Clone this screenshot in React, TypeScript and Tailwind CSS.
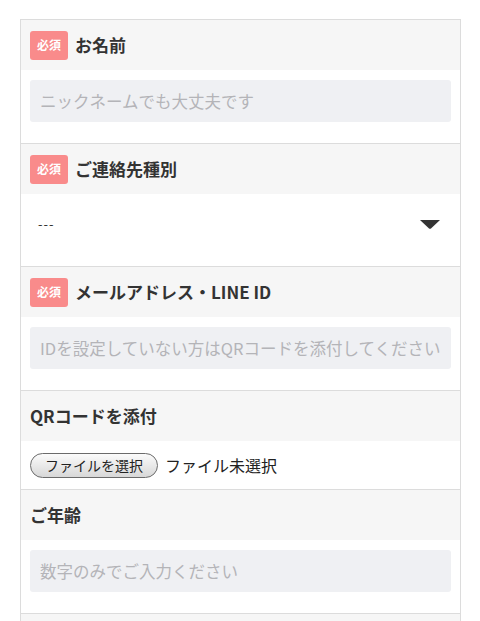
import React from 'react';

const font = { fontFamily: '"Noto Sans CJK JP", "Noto Sans", sans-serif' };

const Badge: React.FC = () => (
    <span className="flex items-center justify-center w-[38px] h-[29px] rounded-[3px] bg-[#f98b8b] text-white text-[12px] font-bold mr-[7px]">
        必須
    </span>
);

const Header: React.FC<{ title: string; required?: boolean }> = ({ title, required }) => (
    <div className="flex items-center h-[50px] bg-[#f6f6f6] px-[9px]">
        {required && <Badge />}
        <span className="text-[17px] font-bold text-[#333]">{title}</span>
    </div>
);

const TextInput: React.FC<{ placeholder: string }> = ({ placeholder }) => (
    <div className="px-[9px] pt-[10px] pb-[21px] bg-white">
        <input
            type="text"
            placeholder={placeholder}
            className="w-full h-[42px] rounded-[3px] bg-[#eff0f3] px-[10px] text-[16.5px] text-[#333] placeholder:text-[#b4b4b8] outline-none"
            style={font}
        />
    </div>
);

export default function App() {
    return (
        <div className="min-h-screen bg-white pt-[19px]" style={font}>
            <div className="ml-[20px] w-[441px] border border-[#dcdcdc] border-b-0">
                <section className="border-b border-[#dcdcdc]">
                    <Header title="お名前" required />
                    <TextInput placeholder="ニックネームでも大丈夫です" />
                </section>

                <section className="border-b border-[#dcdcdc]">
                    <Header title="ご連絡先種別" required />
                    <div className="flex items-center justify-between h-[72px] bg-white pl-[17px] pr-[20px] pb-[12px]">
                        <span className="text-[13px] text-[#333] tracking-[1px]">---</span>
                        <svg width="20" height="9" viewBox="0 0 20 9">
                            <path d="M0 0 H20 L11 8.5 Q10 9 9 8.5 Z" fill="#333" />
                        </svg>
                    </div>
                </section>

                <section className="border-b border-[#dcdcdc]">
                    <Header title="メールアドレス・LINE ID" required />
                    <TextInput placeholder="IDを設定していない方はQRコードを添付してください" />
                </section>

                <section className="border-b border-[#dcdcdc]">
                    <Header title="QRコードを添付" />
                    <div className="flex items-center h-[48px] bg-white px-[9px]">
                        <span className="flex items-center h-[25px] px-[14px] rounded-full border border-[#6b6b6b] bg-gradient-to-b from-[#fbfbfb] to-[#d8d8d8] text-[14px] text-[#222]">
                            ファイルを選択
                        </span>
                        <span className="ml-[7px] text-[16px] text-[#222]">ファイル未選択</span>
                    </div>
                </section>

                <section className="border-b border-[#dcdcdc]">
                    <Header title="ご年齢" />
                    <TextInput placeholder="数字のみでご入力ください" />
                </section>

                <section>
                    <Header title="" />
                </section>
            </div>
        </div>
    );
}
